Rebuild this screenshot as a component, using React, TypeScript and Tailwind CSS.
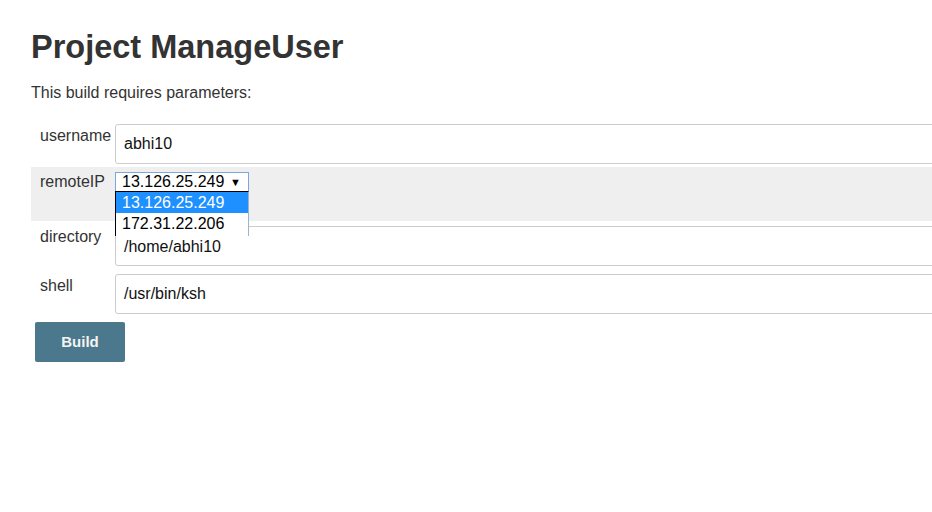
const font = { fontFamily: '"Liberation Sans", Arial, sans-serif' };

// inputs in the screenshot run past the right edge of the window
const Field = ({ value, pt = "" }: { value: string; pt?: string }) => (
  <div className={`flex h-[40px] w-[860px] shrink-0 items-center rounded-[3px] border border-[#cccccc] bg-white pl-[8px] text-[16px] text-[#111] ${pt}`}>
    {value}
  </div>
);

export default function App() {
  return (
    <div className="min-h-[512px] w-[932px] overflow-hidden bg-white pl-[31px] pt-[30px] text-[#333]" style={font}>
      <h1 className="text-[32.5px] font-bold leading-[35px] text-[#333]">Project ManageUser</h1>
      <p className="mt-[18px] text-[16px] leading-[20px]">This build requires parameters:</p>

      <div className="mt-[16px] flex flex-col">
        {/* username */}
        <div className="flex h-[48px] pt-[5px]">
          <div className="w-[84px] shrink-0 pl-[9px] pt-[2px] text-[16px] leading-[20px]">username</div>
          <Field value="abhi10" />
        </div>

        {/* remoteIP with open dropdown */}
        <div className="relative z-10 flex h-[54px] bg-[#efefef] pt-[5px]">
          <div className="w-[84px] shrink-0 pl-[9px] text-[16px] leading-[20px]">remoteIP</div>
          <div className="relative">
            <div className="flex h-[20px] w-[134px] items-center justify-between border border-[#7ba7dc] bg-white pl-[6px] pr-[7px] text-[16px] leading-[18px] text-black">
              <span>13.126.25.249</span>
              <span className="text-[11px]">▼</span>
            </div>
            <div className="absolute left-0 top-[19px] h-[45px] w-[134px] border-l border-r border-t border-l-black border-r-[#9bb3cf] border-t-black bg-white text-[16px] leading-[21px] text-black">
              <div className="h-[21px] bg-[#1e90ff] pl-[6px] text-white">13.126.25.249</div>
              <div className="h-[21px] pl-[6px]">172.31.22.206</div>
            </div>
          </div>
        </div>

        {/* directory */}
        <div className="flex h-[48px] pt-[5px]">
          <div className="w-[84px] shrink-0 pl-[9px] pt-[1px] text-[16px] leading-[20px]">directory</div>
          <Field value="/home/abhi10" pt="pt-[1px]" />
        </div>

        {/* shell */}
        <div className="flex h-[48px] pt-[5px]">
          <div className="w-[84px] shrink-0 pl-[9px] pt-[2px] text-[16px] leading-[20px]">shell</div>
          <Field value="/usr/bin/ksh" />
        </div>
      </div>

      <button className="ml-[4px] mt-[5px] flex h-[40px] w-[90px] items-center justify-center rounded-[2px] bg-[#4b788c] text-[15px] font-bold text-[#f4f4f4]">
        Build
      </button>
    </div>
  );
}
